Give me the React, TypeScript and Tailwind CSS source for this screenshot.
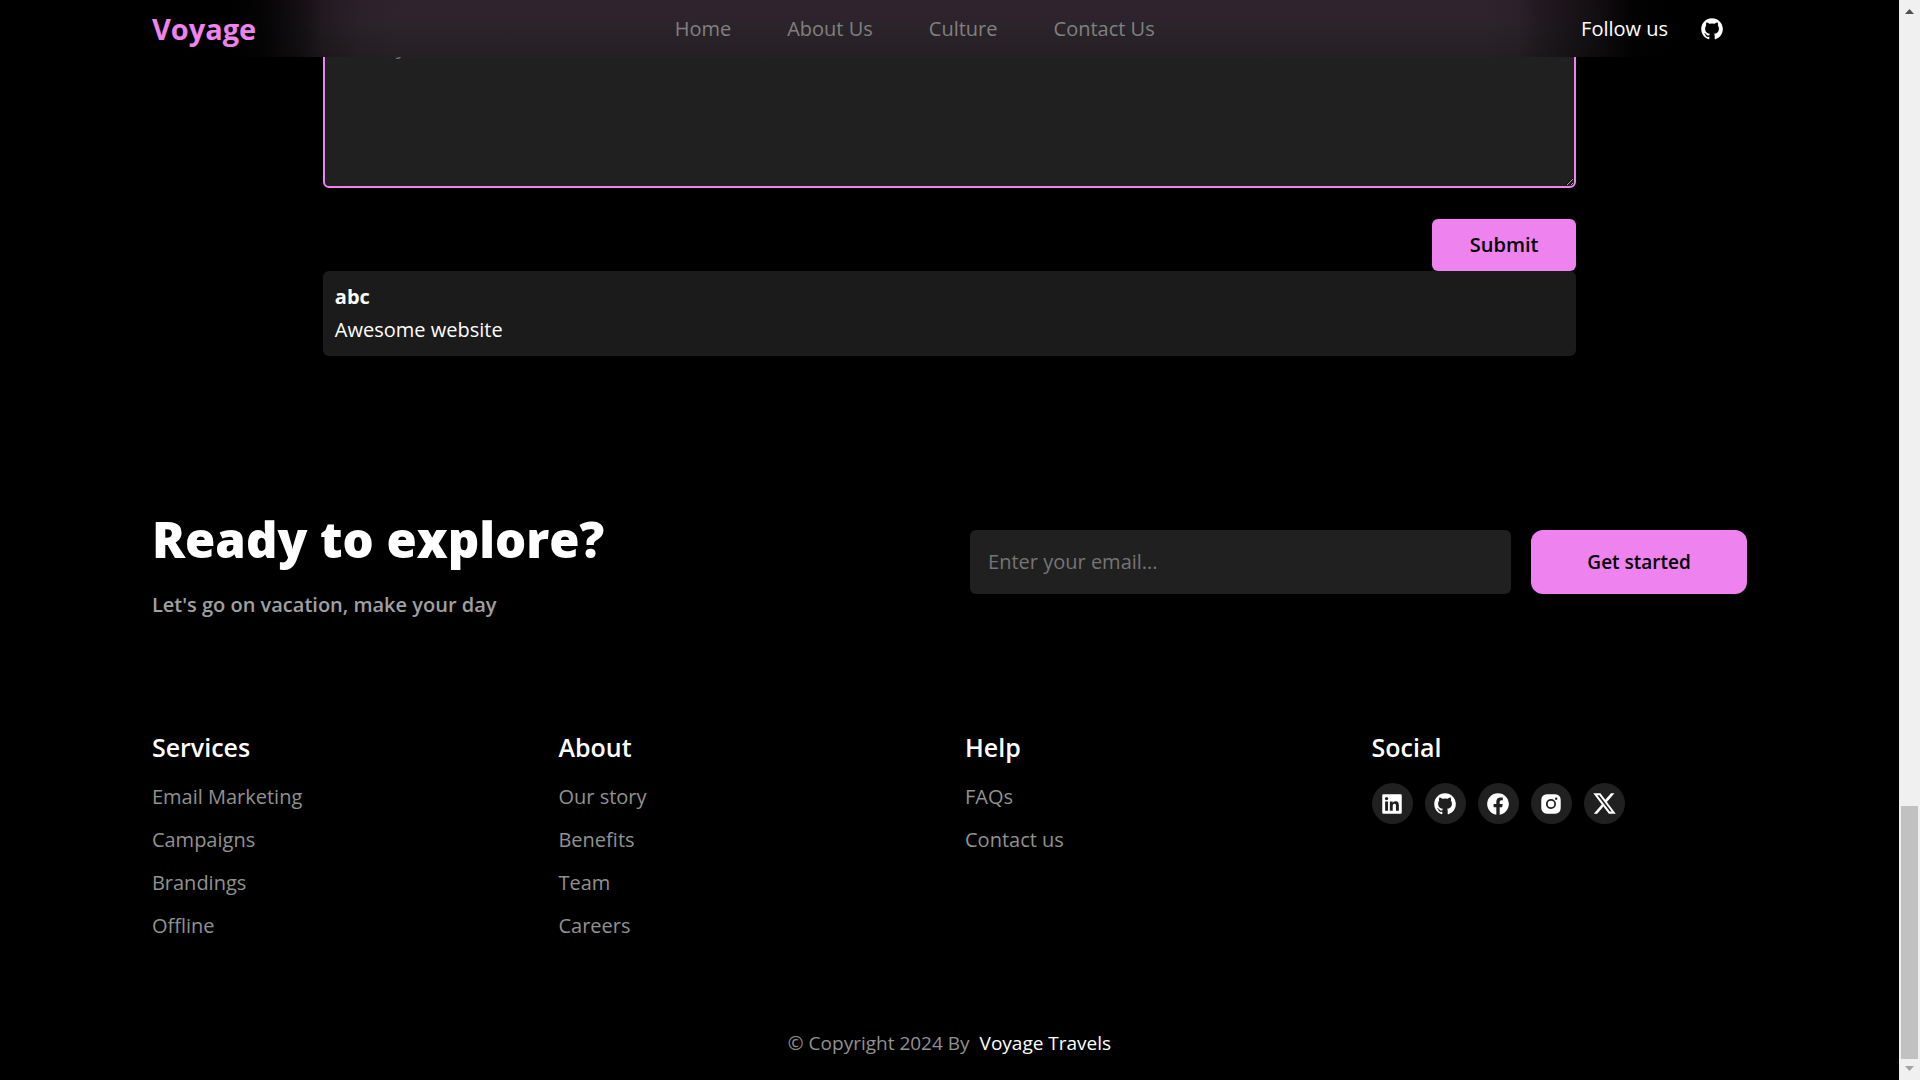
import type { ReactNode } from "react";
import { BiLogoGithub, BiLogoInstagramAlt, BiLogoFacebookCircle, BiLogoLinkedinSquare } from "react-icons/bi";
import { FaXTwitter } from "react-icons/fa6";

const navLinks = ["Home", "About Us", "Culture", "Contact Us"];

const columns = [
  { title: "Services", links: ["Email Marketing", "Campaigns", "Brandings", "Offline"] },
  { title: "About", links: ["Our story", "Benefits", "Team", "Careers"] },
  { title: "Help", links: ["FAQs", "Contact us"] },
];

const socials: { name: string; icon: ReactNode }[] = [
  { name: "LinkedIn", icon: <BiLogoLinkedinSquare size={26} /> },
  { name: "GitHub", icon: <BiLogoGithub size={26} /> },
  { name: "Facebook", icon: <BiLogoFacebookCircle size={26} /> },
  { name: "Instagram", icon: <BiLogoInstagramAlt size={26} /> },
  { name: "X", icon: <FaXTwitter size={25} /> },
];

function Header() {
  return (
    <header className="sticky top-0 z-10 bg-black bg-[linear-gradient(90deg,#000_12%,#000d_14%,#0008_16%,#0004_17%,#0001_19%,transparent_21%,transparent_78%,#0001_80%,#0004_81%,#0009_84%,#000e_86%,#000_88%),linear-gradient(180deg,#2f222c_0%,#2e232c_35%,#2a242a_50%,#261f24_100%)]">
      <div className="mx-[8%] flex h-[57px] items-center justify-between">
        <a href="#" className="text-[29px] font-bold text-[#ee82ee]">Voyage</a>
        <nav className="flex gap-14 pr-2">
          {navLinks.map((label) => (
            <a key={label} href="#" className="font-medium text-[#808080]">{label}</a>
          ))}
        </nav>
        <div className="mr-[22px] flex items-center gap-[31px]">
          <span className="font-medium">Follow us</span>
          <a href="#" aria-label="GitHub"><BiLogoGithub size={26} /></a>
        </div>
      </div>
    </header>
  );
}

function Comments() {
  return (
    <section className="mx-[17%]">
      <textarea
        aria-label="Comment"
        placeholder="Enter your comment"
        className="-mt-[42px] block h-[173px] w-full resize rounded-[6px] border-2 border-[#ee82ee] bg-[#202020] px-4 py-4 placeholder-[#757575] outline-none"
      />
      <div className="mt-[31px] flex justify-end">
        <button className="h-[52px] w-36 rounded-[6px] bg-[#ee82ee] pb-0.5 font-semibold text-black">Submit</button>
      </div>
      <article className="rounded-[6px] bg-[#1b1b1b] px-3 py-3">
        <h3 className="leading-7 font-bold">abc</h3>
        <p className="mt-[5px] leading-7 font-medium">Awesome website</p>
      </article>
    </section>
  );
}

function Newsletter() {
  return (
    <section className="mx-[8%] mt-[149px] flex items-center justify-between">
      <div>
        <h2 className="text-[49px] leading-[68px] font-extrabold">Ready to explore?</h2>
        <p className="mt-[18px] font-semibold text-[#a0a0a0]">Let's go on vacation, make your day</p>
      </div>
      <form className="flex w-[777px] gap-5">
        <input
          type="email"
          aria-label="Email address"
          placeholder="Enter your email..."
          className="h-16 min-w-0 flex-1 rounded-[6px] bg-[#202020] px-[18px] placeholder-[#757575] outline-none"
        />
        <button type="button" className="h-16 w-[216px] rounded-xl bg-[#ee82ee] pt-0.5 text-[19px] font-semibold text-black">Get started</button>
      </form>
    </section>
  );
}

function Footer() {
  return (
    <footer>
      <div className="mx-[8%] mt-28 grid grid-cols-4 gap-[31px]">
        {columns.map(({ title, links }) => (
          <div key={title}>
            <h3 className="text-[25px] leading-[34px] font-semibold">{title}</h3>
            <ul className="mt-[19px] flex flex-col gap-4">
              {links.map((link) => (
                <li key={link}><a href="#" className="block text-[#919191]">{link}</a></li>
              ))}
            </ul>
          </div>
        ))}
        <div>
          <h3 className="text-[25px] leading-[34px] font-semibold">Social</h3>
          <div className="mt-[19px] flex gap-3">
            {socials.map(({ name, icon }) => (
              <a key={name} href="#" aria-label={name} className="flex size-[41px] items-center justify-center rounded-full bg-[#202020]">{icon}</a>
            ))}
          </div>
        </div>
      </div>
      <p className="mt-[91px] flex justify-center gap-[10px] pb-[22px] text-[19px] text-[#919191]">
        © Copyright 2024 By
        <a href="#" className="font-medium text-white">Voyage Travels</a>
      </p>
    </footer>
  );
}

function ScrollTrack() {
  return (
    <div aria-hidden="true" className="sticky top-0 flex h-screen w-[21px] shrink-0 flex-col items-center justify-between bg-[#f0f0f0] py-[9px]">
      <svg width="9" height="5" viewBox="0 0 9 5"><path d="M0 5 4.5 0 9 5Z" fill="#505050" /></svg>
      <div className="flex flex-1 flex-col items-center justify-end pb-[7px]">
        <div className="h-[253px] w-[17px] bg-[#c1c1c1]" />
      </div>
      <svg width="9" height="5" viewBox="0 0 9 5"><path d="M0 0 4.5 5 9 0Z" fill="#a3a3a3" /></svg>
    </div>
  );
}

export default function App() {
  return (
    <div className="flex min-h-screen bg-black font-['Open_Sans',sans-serif] text-[20px] leading-[27px] text-white">
      <div className="min-w-0 flex-1">
        <Header />
        <main>
          <Comments />
          <Newsletter />
        </main>
        <Footer />
      </div>
      <ScrollTrack />
    </div>
  );
}
